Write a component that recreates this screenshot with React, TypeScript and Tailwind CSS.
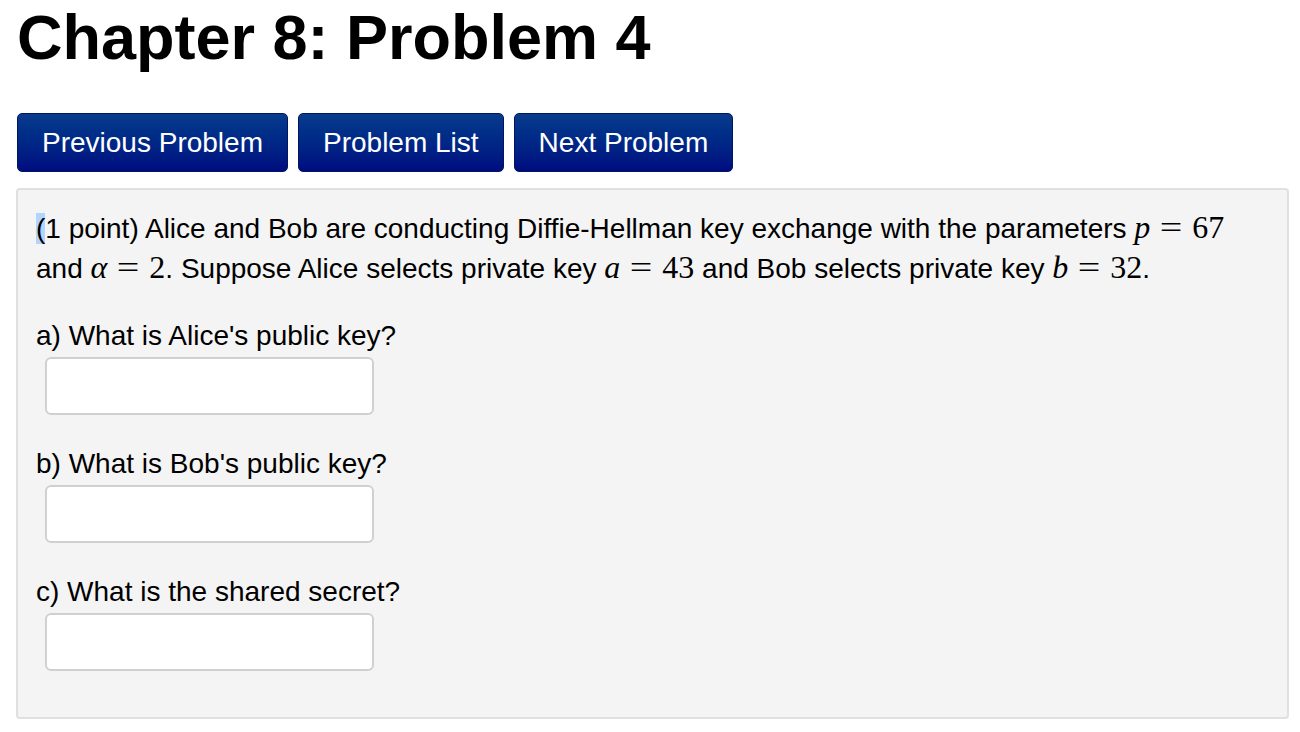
import React from "react";

const serif = "font-['Liberation_Serif','Times_New_Roman',serif]";

const V: React.FC<{ name: string; value: string }> = ({ name, value }) => (
  <span className={`${serif} text-[32px] leading-none whitespace-nowrap`}>
    <span className="italic">{name}</span>
    <span className="mx-[12px] inline-block scale-x-125">=</span>
    {value}
  </span>
);

const Question: React.FC<{ label: string }> = ({ label }) => (
  <div className="mt-[29px] first:mt-[27px]">
    <p className="leading-[40px]">{label}</p>
    <input
      type="text"
      className="ml-[9px] mt-[1px] block h-[58px] w-[329px] rounded-[6px] border-2 border-[#d0d0d0] bg-white"
    />
  </div>
);

export default function App() {
  return (
    <div className="min-h-[732px] bg-white pl-[16px] pr-[11px] pt-[2px] font-['Liberation_Sans',Arial,sans-serif] text-black">
      <h1 className="text-[63px] font-bold leading-[70px] pl-[1px]">Chapter 8: Problem 4</h1>

      <div className="mt-[41px] flex gap-[10px] pl-[1px]">
        {["Previous Problem", "Problem List", "Next Problem"].map((t) => (
          <button
            key={t}
            className="h-[59px] rounded-[5px] border border-[#00175e] bg-gradient-to-b from-[#0a3b8c] to-[#000a80] px-[24px] text-[28px] text-white"
          >
            {t}
          </button>
        ))}
      </div>

      <div className="mt-[16px] h-[531px] rounded-[4px] border-2 border-[#e0e0e0] bg-[#f4f4f4] px-[18px] pt-[19px] text-[28px]">
        <p className="leading-[40px]">
          <span className="bg-[#b3d4fc]">(</span>1 point) Alice and Bob are conducting Diffie-Hellman key exchange with the
          parameters <V name="p" value="67" /> and <V name="α" value="2" />. Suppose Alice selects private key{" "}
          <V name="a" value="43" /> and Bob selects private key <V name="b" value="32" />.
        </p>
        <div>
          <Question label="a) What is Alice's public key?" />
          <Question label="b) What is Bob's public key?" />
          <Question label="c) What is the shared secret?" />
        </div>
      </div>
    </div>
  );
}
